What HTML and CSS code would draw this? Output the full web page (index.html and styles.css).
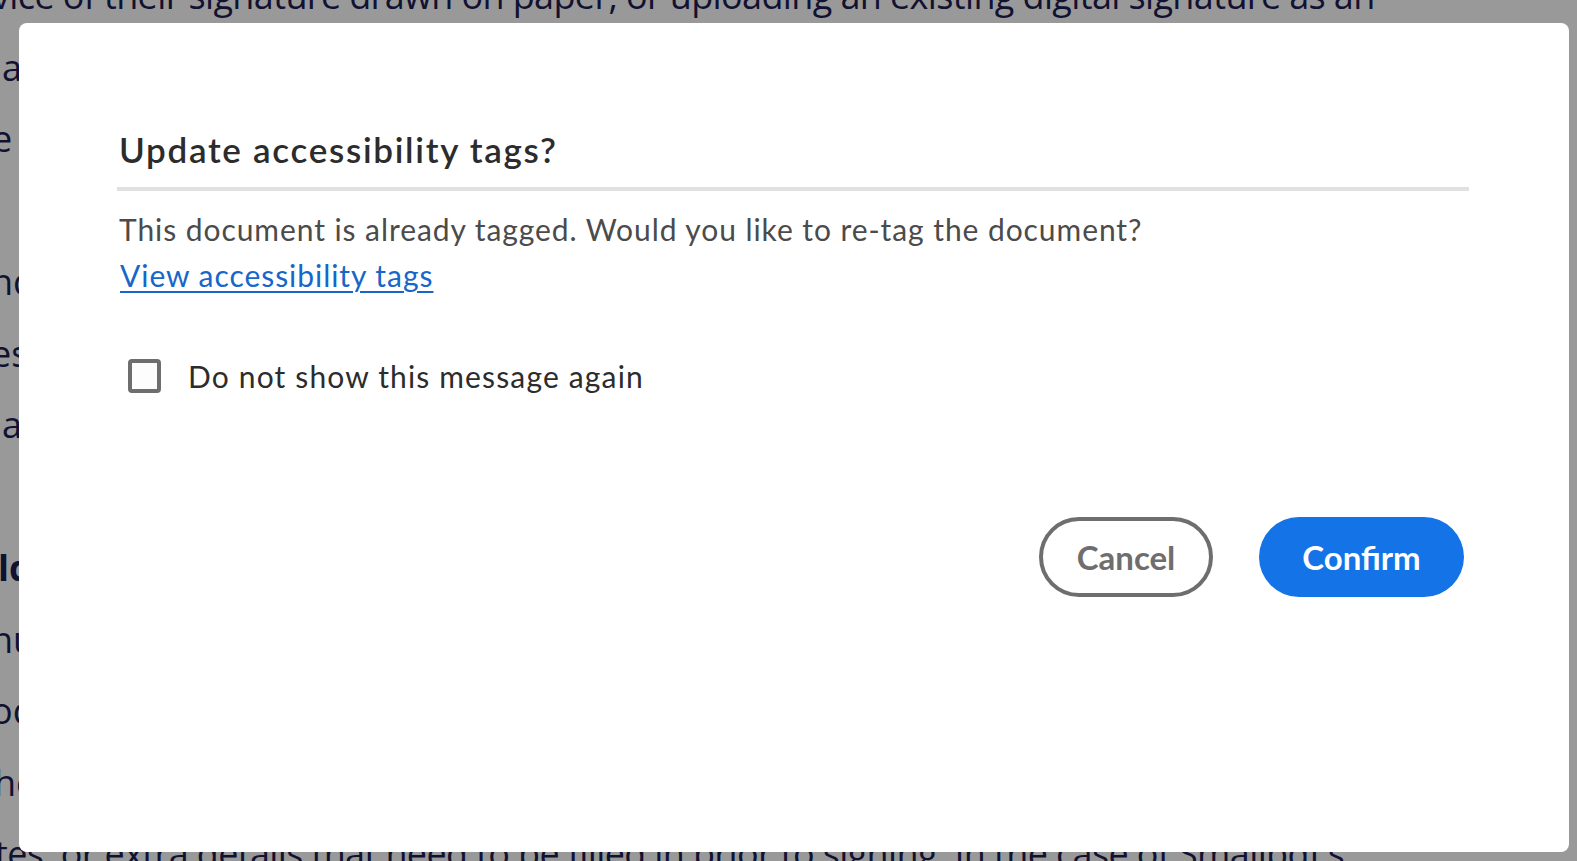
FILE: index.html
```html
<!DOCTYPE html>
<html lang="en">
<head>
<meta charset="utf-8">
<title>Update accessibility tags?</title>
<link rel="stylesheet" href="styles.css">
</head>
<body>
<div class="page">
  <div class="line first">vice of their signature drawn on paper, or uploading an existing digital signature as an</div>
  <div class="line shift-a">a</div>
  <div class="line shift-e">e</div>
  <div class="line"></div>
  <div class="line shift-2">nc</div>
  <div class="line shift-2">es</div>
  <div class="line shift-a">a</div>
  <div class="line"></div>
  <div class="line bold">ld</div>
  <div class="line shift-2">nu</div>
  <div class="line shift-2">oc</div>
  <div class="line shift-h">he</div>
  <div class="line last">tes, or extra details that need to be filled in prior to signing. In the case of Smallpdf's</div>
</div>
<div class="overlay"></div>
<div class="dialog" role="dialog" aria-labelledby="dlg-title">
  <h1 class="dialog-title" id="dlg-title">Update accessibility tags?</h1>
  <div class="dialog-body">
    <p class="dialog-text">This document is already tagged. Would you like to re-tag the document?</p>
    <a class="dialog-link" href="#">View accessibility tags</a>
    <label class="check">
      <span class="check-box"></span>
      <span class="check-label">Do not show this message again</span>
    </label>
  </div>
  <div class="dialog-actions">
    <button class="btn btn-secondary">Cancel</button>
    <button class="btn btn-primary">Confirm</button>
  </div>
</div>
</body>
</html>
```
FILE: styles.css
```css
html, body {
  margin: 0;
  padding: 0;
  width: 1577px;
  height: 861px;
  overflow: hidden;
  background: #ffffff;
}

.page {
  font-family: "Open Sans", "Noto Sans", sans-serif;
  font-size: 36px;
  line-height: 71.5px;
  color: #1d1d52;
  margin-top: -40px;
}

.line {
  height: 71.5px;
  white-space: nowrap;
}

.line.first {
  margin-left: -8px;
  letter-spacing: -0.63px;
}

.line.last {
  margin-left: -5px;
  letter-spacing: -0.63px;
}

.line.shift-a {
  margin-left: 2px;
}

.line.shift-e {
  margin-left: -8px;
}

.line.shift-2 {
  margin-left: -9px;
}

.line.shift-h {
  margin-left: -6px;
}

.line.bold {
  font-weight: 700;
  margin-left: -2px;
}

.overlay {
  position: fixed;
  inset: 0;
  background: rgba(0, 0, 0, 0.4);
}

.dialog {
  position: fixed;
  left: 19px;
  top: 23px;
  width: 1550px;
  height: 829px;
  box-sizing: border-box;
  background: #ffffff;
  border-radius: 8px;
  padding: 104px 100px 0 98px;
  display: flex;
  flex-direction: column;
  font-family: "Lato", "Open Sans", sans-serif;
}

.dialog-title {
  margin: 0;
  font-size: 35px;
  font-weight: 600;
  letter-spacing: 1.7px;
  line-height: 44px;
  color: #2c2c2c;
  padding-bottom: 16px;
  padding-left: 2px;
  border-bottom: 4px solid #e1e1e1;
}

.dialog-body {
  display: flex;
  flex-direction: column;
  align-items: flex-start;
  padding-top: 15px;
}

.dialog-text {
  margin: 0;
  font-size: 30px;
  line-height: 46px;
  letter-spacing: 0.93px;
  color: #4b4b4b;
  padding-left: 2px;
}

.dialog-link {
  font-size: 30px;
  line-height: 46px;
  letter-spacing: 0.95px;
  color: #1766c9;
  text-decoration: underline;
  text-decoration-thickness: 2px;
  text-underline-offset: 4px;
  margin-left: 3px;
}

.check {
  display: flex;
  align-items: center;
  gap: 27px;
  margin-top: 58px;
  margin-left: 11px;
}

.check-box {
  width: 33px;
  height: 34px;
  box-sizing: border-box;
  border: 4px solid #6e6e6e;
  border-radius: 4px;
  background: #fdfdfd;
}

.check-label {
  font-size: 30px;
  line-height: 40px;
  letter-spacing: 1.15px;
  color: #2c2c2c;
}

.dialog-actions {
  display: flex;
  justify-content: flex-end;
  gap: 46px;
  margin-top: 121px;
  padding-right: 5px;
}

.btn {
  height: 80px;
  border-radius: 40px;
  font-family: "Lato", "Open Sans", sans-serif;
  font-size: 33px;
  font-weight: 700;
  box-sizing: border-box;
  cursor: pointer;
}

.btn-secondary {
  width: 174px;
  background: #ffffff;
  border: 4px solid #6e6e6e;
  color: #6e6e6e;
}

.btn-primary {
  width: 205px;
  background: #1473e6;
  border: none;
  color: #ffffff;
}
```
